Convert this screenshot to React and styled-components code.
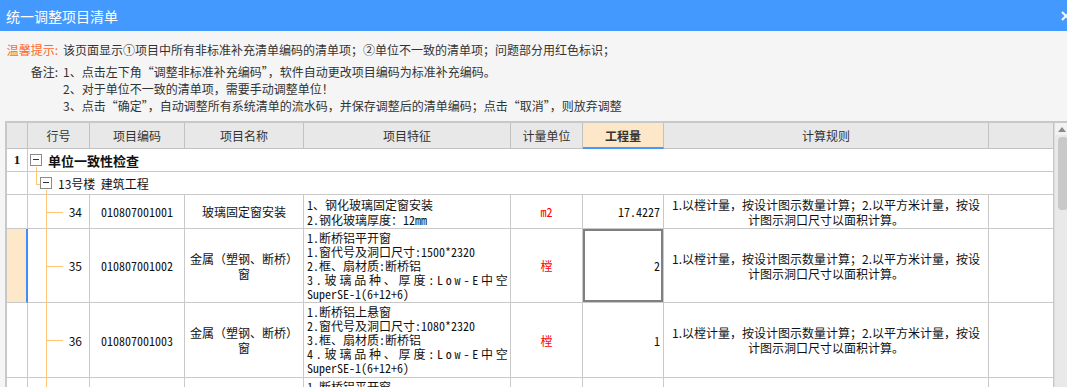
import React from "react";
import styled, { createGlobalStyle, css } from "styled-components";

const GlobalStyle = createGlobalStyle`
  html, body { margin: 0; padding: 0; overflow: hidden; background: #f5f5f5; }
  body { font-family: "Noto Sans CJK SC", "Noto Sans", sans-serif; }
  * { box-sizing: border-box; }
`;

const COLS = "21px 62px 95px 119px 207px 72px 81px 325px 65px";
const LINE = "#c9c9c9";
const TREE = "#ffc675";

const RULE = ["1.以樘计量，按设计图示数量计算；2.以平方米计量，按设", "计图示洞口尺寸以面积计算。"];

const ITEMS = [
    {
        no: 34, code: "010807001001", name: [ "玻璃固定窗安装" ], unit: "m2", qty: "17.4227", h: 34, lh: 15,
        spec: [ "1、钢化玻璃固定窗安装", "2.钢化玻璃厚度：12mm" ],
    },
    {
        no: 35, code: "010807001002", name: [ "金属（塑钢、断桥）", "窗" ], unit: "樘", qty: "2", h: 74, lh: 14, active: true,
        spec: [ "1.断桥铝平开窗", "1.窗代号及洞口尺寸:1500*2320", "2.框、扇材质:断桥铝", "*3.玻璃品种、厚度:Low-E中空", "SuperSE-1(6+12+6)" ],
    },
    {
        no: 36, code: "010807001003", name: [ "金属（塑钢、断桥）", "窗" ], unit: "樘", qty: "1", h: 75, lh: 14,
        spec: [ "1.断桥铝上悬窗", "2.窗代号及洞口尺寸:1080*2320", "3.框、扇材质:断桥铝", "*4.玻璃品种、厚度:Low-E中空", "SuperSE-1(6+12+6)" ],
    },
    {
        no: 37, code: "010807001004", name: [ "金属（塑钢、断桥）", "窗" ], unit: "樘", qty: "1", h: 75, lh: 14,
        spec: [ "1.断桥铝平开窗", "2.窗代号及洞口尺寸:1500*2320", "3.框、扇材质:断桥铝", "*4.玻璃品种、厚度:Low-E中空", "SuperSE-1(6+12+6)" ],
    },
];

const Dialog = styled.div`
    width: 1073px;
    height: 387px;
    overflow: hidden;
    background: #f5f5f5;
`;

const TitleBar = styled.div`
    height: 31px;
    background: #4499ff;
    color: #fff;
    font-size: 14px;
    display: flex;
    align-items: center;
    justify-content: space-between;
    padding: 0 2px 0 6px;
`;

const CloseIcon = () => (
    <svg width="10" height="10" viewBox="0 0 10 10">
        <path d="M1 1 L9 9 M9 1 L1 9" stroke="#fff" strokeWidth="2" />
    </svg>
);

const Notice = styled.div`
    padding-top: 10px;
    font-size: 12px;
    line-height: 17px;
    color: #333;
`;

const NoticeRow = styled.div`
    display: grid;
    grid-template-columns: 58px 1fr;
    column-gap: 5px;
    margin-top: ${ props => props.$gap || 0 }px;
`;

const NoticeLabel = styled.div`
    text-align: right;
    color: ${ props => props.$warn ? "#ff6a2b" : "#333" };
`;

const GridWrap = styled.div`
    margin: 7px 0 0 5px;
    display: flex;
    border-top: 2px solid #c8c8c8;
    border-left: 2px solid #c8c8c8;
    background: #fff;
`;

const Table = styled.div`
    width: 1047px;
    display: flex;
    flex-direction: column;
`;

const Row = styled.div`
    display: grid;
    grid-template-columns: ${ props => props.$group ? "21px 1fr" : COLS };
    height: ${ props => props.$h }px;
    flex: none;
`;

const Cell = styled.div`
    position: relative;
    display: flex;
    align-items: center;
    justify-content: ${ props => props.$align || "center" };
    padding: 0 3px;
    border-right: 1px solid ${ LINE };
    border-bottom: 1px solid ${ LINE };
    font-size: 12px;
    color: #111;
    white-space: nowrap;
    ${ props => props.$selected && css`box-shadow: inset 0 0 0 2px #808080;` }
`;

const HeadCell = styled(Cell)`
    background: ${ props => props.$active ? "#fde7c9" : "#e8e8e8" };
    color: #333;
    border-color: #c2c2c2;
    font-weight: ${ props => props.$active ? 700 : 400 };
    ${ props => props.$active && css`border-bottom: 2px solid #4499ff;` }
`;

const RowHead = styled(Cell)`
    padding: 0;
    font-family: "Liberation Serif", serif;
    font-weight: 700;
    font-size: 13px;
    ${ props => props.$active && css`
        background: #fde8c9;
        border-right: 2px solid #3d8dff;
    ` }
`;

const GroupCell = styled(Cell)`
    justify-content: flex-start;
    padding-left: ${ props => props.$indent }px;
    gap: ${ props => props.$gapX }px;
    font-size: ${ props => props.$bold ? 13 : 12 }px;
    font-weight: ${ props => props.$bold ? 700 : 400 };

    ${ props => props.$level === 1 && css`
        &::after {
            content: "";
            position: absolute;
            left: 8px;
            top: 18px;
            bottom: -1px;
            width: 1px;
            background: ${ TREE };
        }
    ` }
    ${ props => props.$level === 2 && css`
        &::before {
            content: "";
            position: absolute;
            left: 8px;
            top: 0;
            width: 5px;
            height: 12px;
            border-left: 1px solid ${ TREE };
            border-bottom: 1px solid ${ TREE };
        }
        &::after {
            content: "";
            position: absolute;
            left: 18px;
            top: 18px;
            bottom: -1px;
            width: 1px;
            background: ${ TREE };
        }
    ` }
`;

const Expander = styled.span`
    position: relative;
    width: 12px;
    height: 12px;
    flex: none;
    border: 1px solid #8a8a8a;
    background: #fff;

    &::after {
        content: "";
        position: absolute;
        left: 2px;
        top: 4px;
        width: 6px;
        height: 1px;
        background: #333;
    }
`;

const NumCell = styled(Cell)`
    justify-content: flex-end;
    padding-right: 7px;

    &::before {
        content: "";
        position: absolute;
        left: 18px;
        top: -1px;
        bottom: -1px;
        width: 1px;
        background: ${ TREE };
    }
    &::after {
        content: "";
        position: absolute;
        left: 19px;
        top: 50%;
        width: 16px;
        height: 1px;
        background: ${ TREE };
    }
`;

const Code = styled.span`
    font-feature-settings: "hwid";
`;

const Lines = styled(Cell)`
    flex-direction: column;
    align-items: ${ props => props.$left ? "flex-start" : "center" };
    justify-content: center;
    line-height: ${ props => props.$lh }px;
    font-feature-settings: ${ props => props.$half ? "\"hwid\"" : "normal" };
`;

const Line = styled.div`
    letter-spacing: ${ props => props.$stretch ? "2.8px" : "normal" };
`;

const Unit = styled(Cell)`
    color: #ff0000;
    font-feature-settings: "hwid";
`;

const Qty = styled(Cell)`
    justify-content: flex-end;
    font-feature-settings: "hwid";
`;

const Scrollbar = styled.div`
    width: 17px;
    display: flex;
    flex-direction: column;
    background: #e9e9e9;
    border-left: 1px solid #dcdcdc;
`;

const ScrollButton = styled.div`
    height: 12px;
    background: #f2f2f2;
    display: flex;
    align-items: center;
    padding-left: 3px;
`;

const Thumb = styled.div`
    margin: 2px 0 0 3px;
    width: 10px;
    height: 73px;
    border-radius: 4px;
    background: #c9c9c9;
`;

const HEAD = [ "", "行号", "项目编码", "项目名称", "项目特征", "计量单位", "工程量", "计算规则", "" ];

export default function App() {
    return (
        <>
            <GlobalStyle />
            <Dialog>
                <TitleBar>
                    <span>统一调整项目清单</span>
                    <CloseIcon />
                </TitleBar>
                <Notice>
                    <NoticeRow>
                        <NoticeLabel $warn>温馨提示:</NoticeLabel>
                        <div>该页面显示①项目中所有非标准补充清单编码的清单项；②单位不一致的清单项；问题部分用红色标识；</div>
                    </NoticeRow>
                    <NoticeRow $gap={ 5 }>
                        <NoticeLabel>备注:</NoticeLabel>
                        <div>
                            <div>1、点击左下角“调整非标准补充编码”，软件自动更改项目编码为标准补充编码。</div>
                            <div>2、对于单位不一致的清单项，需要手动调整单位！</div>
                            <div>3、点击“确定”，自动调整所有系统清单的流水码，并保存调整后的清单编码；点击“取消”，则放弃调整</div>
                        </div>
                    </NoticeRow>
                </Notice>
                <GridWrap>
                    <Table>
                        <Row $h={ 26 }>
                            { HEAD.map( ( label, i ) => (
                                <HeadCell key={ i } $active={ label === "工程量" }>{ label }</HeadCell>
                            ) ) }
                        </Row>
                        <Row $group $h={ 23 }>
                            <RowHead>1</RowHead>
                            <GroupCell $level={ 1 } $indent={ 2 } $gapX={ 6 } $bold>
                                <Expander />
                                <span>单位一致性检查</span>
                            </GroupCell>
                        </Row>
                        <Row $group $h={ 23 }>
                            <RowHead />
                            <GroupCell $level={ 2 } $indent={ 12 } $gapX={ 6 }>
                                <Expander />
                                <span>13号楼&nbsp;&nbsp;建筑工程</span>
                            </GroupCell>
                        </Row>
                        { ITEMS.map( item => (
                            <Row key={ item.no } $h={ item.h }>
                                <RowHead $active={ item.active } />
                                <NumCell>{ item.no }</NumCell>
                                <Cell><Code>{ item.code }</Code></Cell>
                                <Lines $lh={ 15 }>
                                    { item.name.map( n => <Line key={ n }>{ n }</Line> ) }
                                </Lines>
                                <Lines $left $half $lh={ item.lh }>
                                    { item.spec.map( s => (
                                        <Line key={ s } $stretch={ s.startsWith( "*" ) }>{ s.replace( /^\*/, "" ) }</Line>
                                    ) ) }
                                </Lines>
                                <Unit>{ item.unit }</Unit>
                                <Qty $selected={ item.active }>{ item.qty }</Qty>
                                <Lines $lh={ 15 }>
                                    { RULE.map( r => <Line key={ r }>{ r }</Line> ) }
                                </Lines>
                                <Cell />
                            </Row>
                        ) ) }
                    </Table>
                    <Scrollbar>
                        <ScrollButton>
                            <svg width="8" height="5" viewBox="0 0 8 5"><path d="M0 5 L4 0 L8 5 Z" fill="#8a8a8a" /></svg>
                        </ScrollButton>
                        <Thumb />
                    </Scrollbar>
                </GridWrap>
            </Dialog>
        </>
    );
}
